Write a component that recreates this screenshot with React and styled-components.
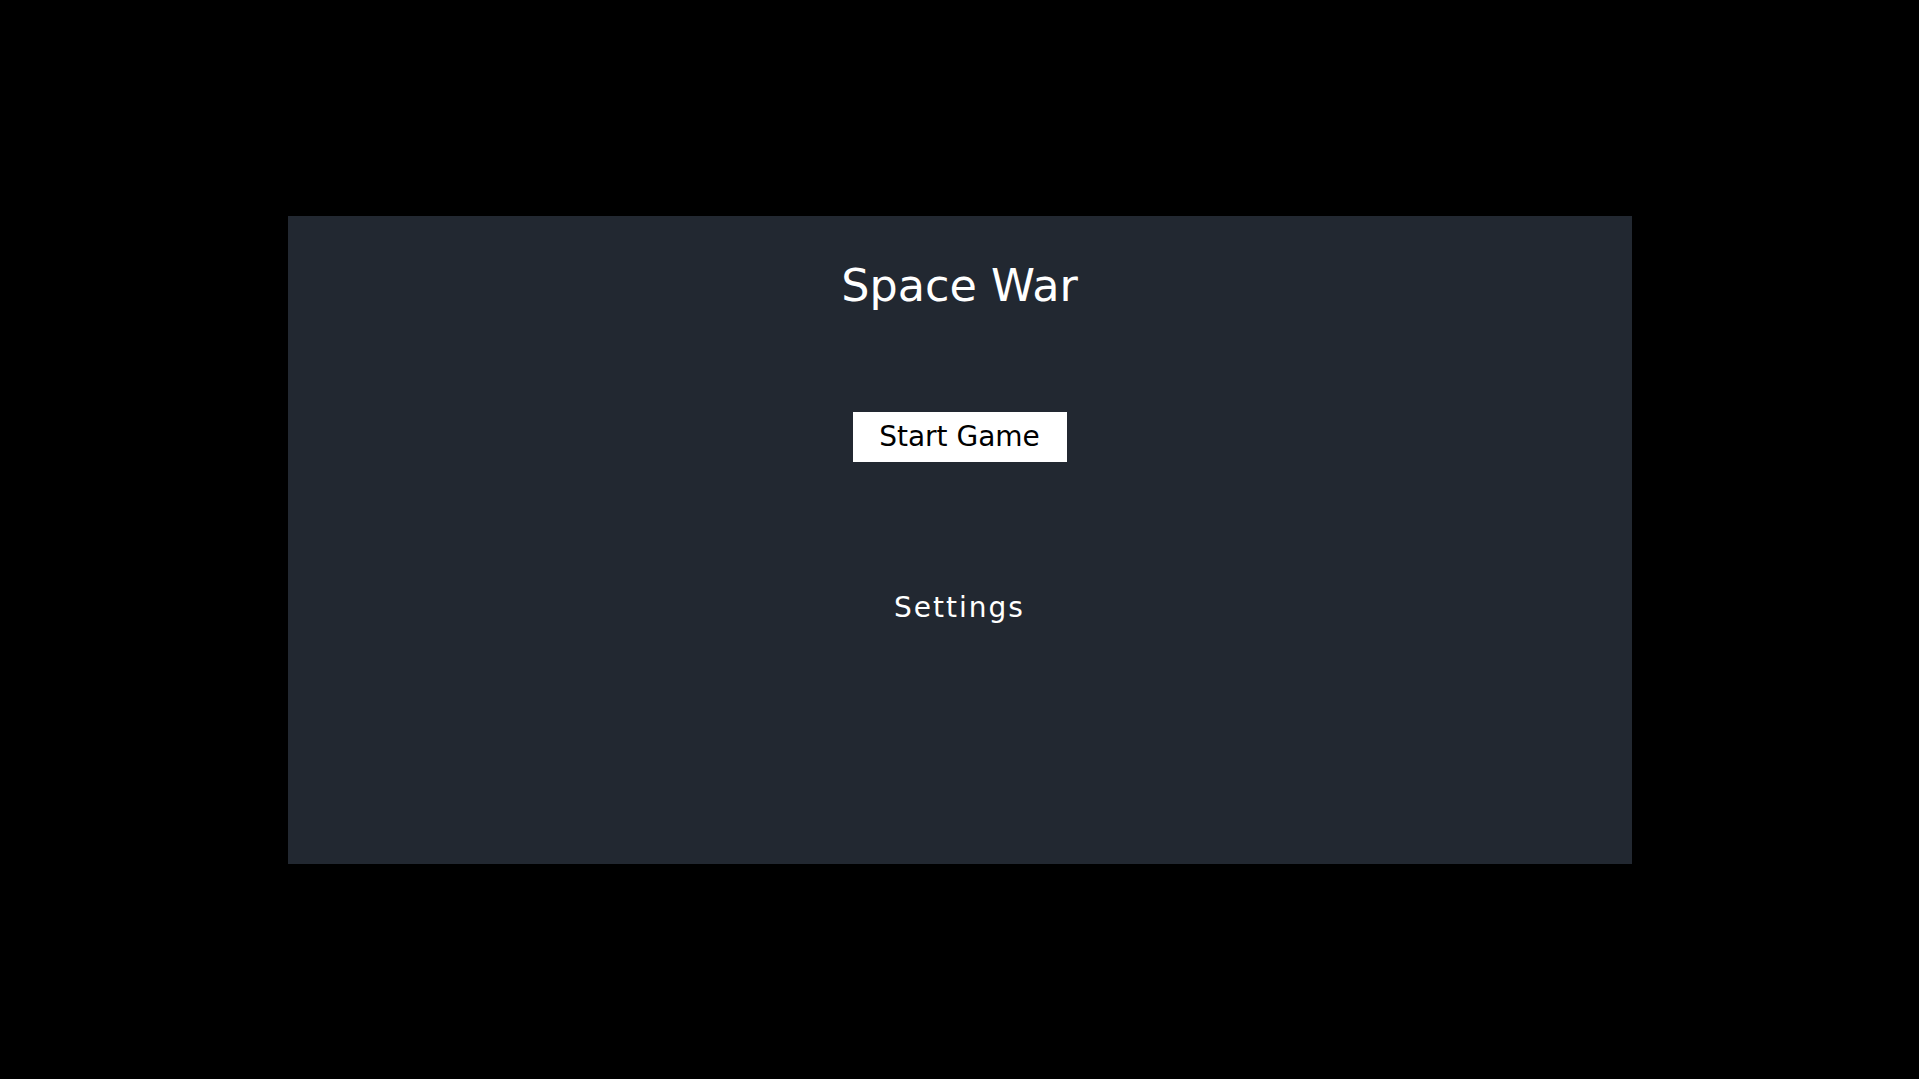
import React from "react";
import styled, { createGlobalStyle } from "styled-components";

const Global = createGlobalStyle`
  html, body {
    margin: 0;
    padding: 0;
    background: #000000;
  }
  body {
    font-family: "DejaVu Sans", Verdana, sans-serif;
  }
`;

const Screen = styled.div`
  width: 100vw;
  height: 100vh;
  display: flex;
  align-items: center;
  justify-content: center;
  background: #000000;
`;

const Panel = styled.div`
  width: 1344px;
  height: 648px;
  box-sizing: border-box;
  background: #222831;
  display: flex;
  flex-direction: column;
  align-items: center;
  padding-top: 42px;
`;

const Title = styled.h1`
  margin: 0;
  font-family: "DejaVu Sans", Verdana, sans-serif;
  font-weight: 400;
  font-size: 44.5px;
  line-height: 55px;
  color: #ffffff;
`;

const Menu = styled.div`
  display: flex;
  flex-direction: column;
  align-items: center;
  gap: 121px;
  margin-top: 99px;
`;

const MenuButton = styled.button`
  width: 214px;
  height: 50px;
  box-sizing: border-box;
  margin: 0;
  padding: 0;
  border: none;
  font-family: "DejaVu Sans", Verdana, sans-serif;
  font-size: 28px;
  line-height: 50px;
  cursor: pointer;
  background: ${(p) => (p.$primary ? "#ffffff" : "transparent")};
  color: ${(p) => (p.$primary ? "#000000" : "#ffffff")};
  letter-spacing: ${(p) => (p.$primary ? "0" : "2px")};
`;

export default function App() {
  return (
    <>
      <Global />
      <Screen>
        <Panel>
          <Title>Space War</Title>
          <Menu>
            <MenuButton $primary>Start Game</MenuButton>
            <MenuButton>Settings</MenuButton>
          </Menu>
        </Panel>
      </Screen>
    </>
  );
}
